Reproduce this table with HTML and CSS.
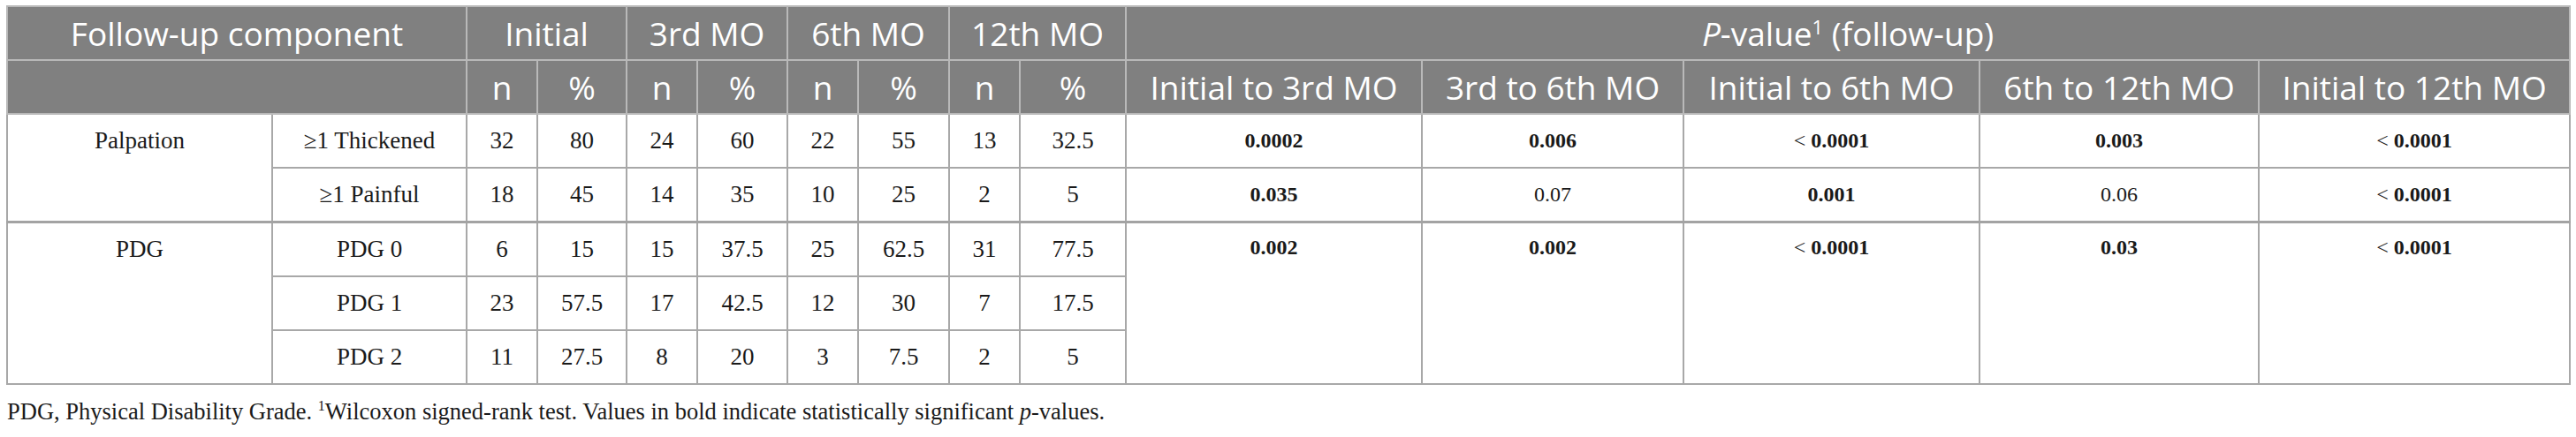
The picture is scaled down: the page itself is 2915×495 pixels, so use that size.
FILE: index.html
```html
<!DOCTYPE html>
<html lang="en">
<head>
<meta charset="utf-8">
<title>Follow-up components</title>
<link rel="stylesheet" href="styles.css">
</head>
<body>
<div class="page">
<table class="data">
  <colgroup>
    <col class="c-comp"><col class="c-sub">
    <col class="c-n"><col class="c-p1">
    <col class="c-n"><col class="c-p2">
    <col class="c-n"><col class="c-p3">
    <col class="c-n"><col class="c-p4">
    <col class="c-pv1"><col class="c-pv2"><col class="c-pv3"><col class="c-pv4"><col class="c-pv5">
  </colgroup>
  <thead>
    <tr class="hr">
      <th colspan="2">Follow-up component</th>
      <th colspan="2">Initial</th>
      <th colspan="2">3rd MO</th>
      <th colspan="2">6th MO</th>
      <th colspan="2">12th MO</th>
      <th colspan="5"><i>P</i>-value<sup>1</sup> (follow-up)</th>
    </tr>
    <tr class="hr">
      <th colspan="2"></th>
      <th>n</th><th>%</th>
      <th>n</th><th>%</th>
      <th>n</th><th>%</th>
      <th>n</th><th>%</th>
      <th>Initial to 3rd MO</th>
      <th>3rd to 6th MO</th>
      <th>Initial to 6th MO</th>
      <th>6th to 12th MO</th>
      <th>Initial to 12th MO</th>
    </tr>
  </thead>
  <tbody>
    <tr class="br">
      <td rowspan="2" class="top">Palpation</td>
      <td>&ge;1 Thickened</td>
      <td>32</td><td>80</td><td>24</td><td>60</td><td>22</td><td>55</td><td>13</td><td>32.5</td>
      <td class="pv"><b>0.0002</b></td>
      <td class="pv"><b>0.006</b></td>
      <td class="pv">&lt; <b>0.0001</b></td>
      <td class="pv"><b>0.003</b></td>
      <td class="pv">&lt; <b>0.0001</b></td>
    </tr>
    <tr class="br">
      <td>&ge;1 Painful</td>
      <td>18</td><td>45</td><td>14</td><td>35</td><td>10</td><td>25</td><td>2</td><td>5</td>
      <td class="pv"><b>0.035</b></td>
      <td class="pv">0.07</td>
      <td class="pv"><b>0.001</b></td>
      <td class="pv">0.06</td>
      <td class="pv">&lt; <b>0.0001</b></td>
    </tr>
    <tr class="br group">
      <td rowspan="3" class="top">PDG</td>
      <td>PDG 0</td>
      <td>6</td><td>15</td><td>15</td><td>37.5</td><td>25</td><td>62.5</td><td>31</td><td>77.5</td>
      <td rowspan="3" class="pv top"><b>0.002</b></td>
      <td rowspan="3" class="pv top"><b>0.002</b></td>
      <td rowspan="3" class="pv top">&lt; <b>0.0001</b></td>
      <td rowspan="3" class="pv top"><b>0.03</b></td>
      <td rowspan="3" class="pv top">&lt; <b>0.0001</b></td>
    </tr>
    <tr class="br">
      <td>PDG 1</td>
      <td>23</td><td>57.5</td><td>17</td><td>42.5</td><td>12</td><td>30</td><td>7</td><td>17.5</td>
    </tr>
    <tr class="br">
      <td>PDG 2</td>
      <td>11</td><td>27.5</td><td>8</td><td>20</td><td>3</td><td>7.5</td><td>2</td><td>5</td>
    </tr>
  </tbody>
</table>
<p class="note">PDG, Physical Disability Grade. <sup>1</sup>Wilcoxon signed-rank test. Values in bold indicate statistically significant <i>p</i>-values.</p>
</div>
</body>
</html>
```
FILE: styles.css
```css
html, body {
  margin: 0;
  padding: 0;
  background: #ffffff;
}
.page {
  padding: 6px 0 0 7px;
}
.data {
  border-collapse: collapse;
  table-layout: fixed;
  width: 2900px;
  border: 2px solid #a3a3a3;
}
.c-comp { width: 300px; }
.c-sub { width: 220px; }
.c-n { width: 80px; }
.c-p1 { width: 101px; }
.c-p2 { width: 102px; }
.c-p3 { width: 103px; }
.c-p4 { width: 120px; }
.c-pv1 { width: 335px; }
.c-pv2 { width: 296px; }
.c-pv3 { width: 335px; }
.c-pv4 { width: 316px; }
.c-pv5 { width: 352px; }

.hr th {
  background: #808080;
  color: #ffffff;
  font-family: "Open Sans", "Noto Sans", sans-serif;
  font-weight: 400;
  font-size: 37px;
  height: 59px;
  padding: 0;
  text-align: center;
  vertical-align: middle;
  border: 2px solid #b9b9b9;
  white-space: nowrap;
}
.hr th sup {
  font-size: 22px;
  line-height: 0;
}
.br td {
  font-family: "Liberation Serif", "Times New Roman", serif;
  font-size: 27px;
  color: #1a1a1a;
  height: 59px;
  padding: 0;
  text-align: center;
  vertical-align: middle;
  border: 2px solid #a8a8a8;
}
.br td.top {
  vertical-align: top;
  padding-top: 14px;
}
.br td.pv {
  font-size: 24px;
}
.br td.pv b {
  font-weight: 700;
}
.group td {
  border-top: 3px solid #a3a3a3;
}
.note {
  margin: 9px 0 0 1px;
  font-family: "Liberation Serif", "Times New Roman", serif;
  font-size: 26.5px;
  line-height: 30px;
  color: #1a1a1a;
}
.note sup {
  font-size: 16px;
}
```
